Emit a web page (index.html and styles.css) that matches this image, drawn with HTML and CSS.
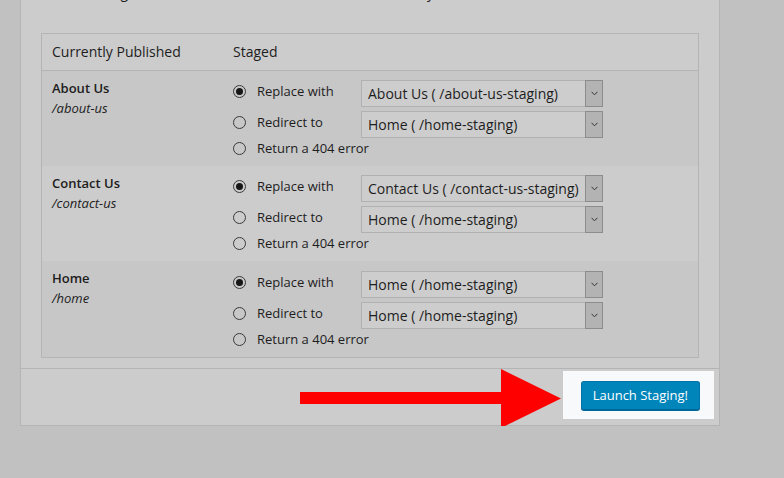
FILE: index.html
```html
<!DOCTYPE html>
<html lang="en">
<head>
<meta charset="utf-8">
<title>Launch Staging</title>
<link rel="stylesheet" href="styles.css">
</head>
<body>
<div class="panel">
  <p class="intro">The following items will be made live on the site as soon as you click the button below.</p>
  <div class="table">
    <div class="thead">
      <div class="c1">Currently Published</div>
      <div class="c2">Staged</div>
    </div>

    <div class="row alt">
      <div class="c1">
        <div class="title">About Us</div>
        <div class="path">/about-us</div>
      </div>
      <div class="c2">
        <div class="opt sel"><span class="radio checked"></span><span class="label">Replace with</span>
          <div class="select"><span class="select-value">About Us ( /about-us-staging)</span><span class="select-arrow"><svg width="7" height="5" viewBox="0 0 7 5"><path d="M0.5 0.8 L3.5 3.8 L6.5 0.8" fill="none" stroke="#333" stroke-width="1"/></svg></span></div>
        </div>
        <div class="opt sel"><span class="radio"></span><span class="label">Redirect to</span>
          <div class="select"><span class="select-value">Home ( /home-staging)</span><span class="select-arrow"><svg width="7" height="5" viewBox="0 0 7 5"><path d="M0.5 0.8 L3.5 3.8 L6.5 0.8" fill="none" stroke="#333" stroke-width="1"/></svg></span></div>
        </div>
        <div class="opt last"><span class="radio"></span><span class="label">Return a 404 error</span></div>
      </div>
    </div>

    <div class="row">
      <div class="c1">
        <div class="title">Contact Us</div>
        <div class="path">/contact-us</div>
      </div>
      <div class="c2">
        <div class="opt sel"><span class="radio checked"></span><span class="label">Replace with</span>
          <div class="select"><span class="select-value">Contact Us ( /contact-us-staging)</span><span class="select-arrow"><svg width="7" height="5" viewBox="0 0 7 5"><path d="M0.5 0.8 L3.5 3.8 L6.5 0.8" fill="none" stroke="#333" stroke-width="1"/></svg></span></div>
        </div>
        <div class="opt sel"><span class="radio"></span><span class="label">Redirect to</span>
          <div class="select"><span class="select-value">Home ( /home-staging)</span><span class="select-arrow"><svg width="7" height="5" viewBox="0 0 7 5"><path d="M0.5 0.8 L3.5 3.8 L6.5 0.8" fill="none" stroke="#333" stroke-width="1"/></svg></span></div>
        </div>
        <div class="opt last"><span class="radio"></span><span class="label">Return a 404 error</span></div>
      </div>
    </div>

    <div class="row alt">
      <div class="c1">
        <div class="title">Home</div>
        <div class="path">/home</div>
      </div>
      <div class="c2">
        <div class="opt sel"><span class="radio checked"></span><span class="label">Replace with</span>
          <div class="select"><span class="select-value">Home ( /home-staging)</span><span class="select-arrow"><svg width="7" height="5" viewBox="0 0 7 5"><path d="M0.5 0.8 L3.5 3.8 L6.5 0.8" fill="none" stroke="#333" stroke-width="1"/></svg></span></div>
        </div>
        <div class="opt sel"><span class="radio"></span><span class="label">Redirect to</span>
          <div class="select"><span class="select-value">Home ( /home-staging)</span><span class="select-arrow"><svg width="7" height="5" viewBox="0 0 7 5"><path d="M0.5 0.8 L3.5 3.8 L6.5 0.8" fill="none" stroke="#333" stroke-width="1"/></svg></span></div>
        </div>
        <div class="opt last"><span class="radio"></span><span class="label">Return a 404 error</span></div>
      </div>
    </div>
  </div>

  <div class="footer">
    <svg class="arrow" width="262" height="60" viewBox="0 0 262 60">
      <rect x="0" y="23" width="203" height="12" fill="#ff0000"/>
      <polygon points="201,0 201,59 261,29.5" fill="#ff0000"/>
    </svg>
    <div class="spot"><button class="btn" type="button">Launch Staging!</button></div>
  </div>
</div>
</body>
</html>
```

FILE: styles.css
```css
* { box-sizing: border-box; }

body {
  margin: 0;
  background: #c1c1c1;
  font-family: "Open Sans", "DejaVu Sans", sans-serif;
  color: #1d1d1d;
  overflow: hidden;
}

.panel {
  width: 700px;
  margin: -20px 0 0 20px;
  padding-top: 3px;
  background: #cccccc;
  border: 1px solid #b4b4b4;
  border-top: 0;
}

.intro {
  margin: 0 20px;
  font-size: 14px;
  line-height: 20px;
  white-space: nowrap;
  overflow: hidden;
}

.table {
  margin: 30px 20px 10px;
  border: 1px solid #b4b4b4;
  background: #cccccc;
}

.thead,
.row {
  display: grid;
  grid-template-columns: 181px 1fr;
}

.thead {
  border-bottom: 1px solid #b4b4b4;
  font-size: 14px;
  line-height: 20px;
}

.thead .c1,
.thead .c2 {
  padding: 8px 10px;
}

.row.alt {
  background: #c7c7c7;
}

.row .c1 {
  padding: 7px 10px;
  font-size: 13px;
  line-height: 20px;
}

.title {
  font-weight: 600;
}

.path {
  font-style: italic;
}

.row .c2 {
  padding: 9px 10px 8px;
}

.row:last-child .c2 {
  padding-top: 10px;
}

.opt {
  display: flex;
  align-items: flex-start;
  font-size: 13px;
}

.opt.sel {
  height: 27px;
}

.opt.sel .radio {
  margin-top: 5px;
}

.opt.sel .label {
  line-height: 23px;
}

.opt.sel + .opt.sel {
  margin-top: 4px;
}

.opt.last {
  height: 20px;
  align-items: center;
}

.radio {
  flex: none;
  width: 13px;
  height: 13px;
  border: 1px solid #3a3a3a;
  border-radius: 50%;
  display: grid;
  place-items: center;
}

.radio.checked::after {
  content: "";
  width: 7px;
  height: 7px;
  border-radius: 50%;
  background: #161616;
}

.label {
  margin-left: 11px;
  width: 104px;
  flex: none;
  white-space: nowrap;
}

.select {
  display: flex;
  width: 242px;
  height: 27px;
  border: 1px solid #b1b1b1;
  background: #cdcdcd;
  font-size: 14px;
}

.select-value {
  flex: 1;
  padding-left: 6px;
  line-height: 25px;
  white-space: nowrap;
  overflow: hidden;
}

.select-arrow {
  flex: none;
  width: 18px;
  margin: -1px -1px -1px 0;
  border: 1px solid #8c8c8c;
  background: #b3b3b3;
  display: grid;
  place-items: center;
}

.select-arrow svg {
  display: block;
}

.footer {
  position: relative;
  border-top: 1px solid #b4b4b4;
  display: flex;
  justify-content: flex-end;
  padding: 12px 19px 15px 20px;
}

.arrow {
  position: absolute;
  left: 279px;
  top: 0;
  display: block;
}

.spot {
  position: relative;
}

.spot::before {
  content: "";
  position: absolute;
  top: -10px;
  bottom: -9px;
  left: -18px;
  right: -14px;
  background: #f8f9fa;
}

.btn {
  position: relative;
  display: block;
  height: 29px;
  padding: 0 11px;
  font-family: "Open Sans", "DejaVu Sans", sans-serif;
  font-size: 13px;
  line-height: 27px;
  color: #ffffff;
  background: #0085ba;
  border: 1px solid #0073aa;
  border-bottom-color: #006799;
  border-radius: 3px;
  box-shadow: 0 1px 0 #006799;
  cursor: pointer;
}
```
